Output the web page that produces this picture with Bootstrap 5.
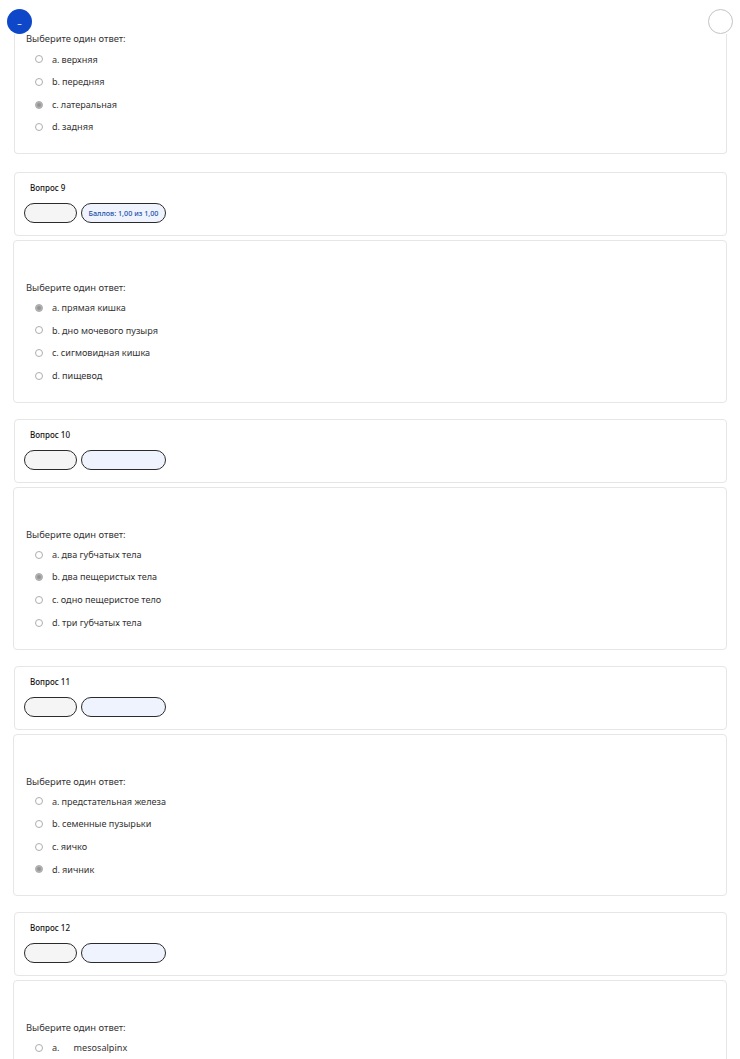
<!DOCTYPE html>
<html lang="ru">
<head>
  <meta charset="UTF-8" />
  <meta name="viewport" content="width=device-width, initial-scale=1" />
  <title>Тест</title>
  <link href="https://cdn.jsdelivr.net/npm/bootstrap@5.3.3/dist/css/bootstrap.min.css" rel="stylesheet" />
  <style>
    body {
      font-family: "Noto Sans", sans-serif;
      font-size: 9.1px;
      color: #333;
      background: #fff;
      height: 1059px;
      overflow: hidden;
    }

    /* white strip under the two round buttons, hides the scrolled card top */
    .top-strip {
      position: fixed;
      top: 0;
      left: 0;
      right: 0;
      height: 34px;
      background: #fff;
      z-index: 5;
    }

    .round-btn {
      position: fixed;
      top: 9px;
      width: 25px;
      height: 25px;
      border-radius: 50%;
      z-index: 6;
    }

    .round-btn-blue {
      left: 7px;
      background: #0f47c9;
      color: #fff;
      font-size: 9px;
      line-height: 29px;
      text-align: center;
    }

    .round-btn-white {
      left: 708px;
      background: #fff;
      border: 1px solid #c4c4c4;
    }

    .quiz-wrap {
      padding: 0 13px 0 14px;
    }

    .quiz-box {
      border: 1px solid #e6e6e6;
      border-radius: 4px;
      background: #fff;
    }

    .first-box {
      height: 153.5px;
      border-top: 0;
      border-radius: 0 0 4px 4px;
      padding-top: 32px;
      margin-bottom: 18.5px;
    }

    .q-info {
      height: 64px;
      padding: 9px 9px 0;
      margin-bottom: 4px;
    }

    .q-title {
      font-size: 8px;
      font-weight: 500;
      color: #111;
      line-height: 12px;
      padding-left: 6px;
      margin-bottom: 9px;
    }

    .q-pill {
      height: 20px;
      border: 1px solid #2b2b2b;
      border-radius: 10px;
      font-size: 7.2px;
      font-weight: 500;
      color: #1a4fa8;
      line-height: 18px;
      text-align: center;
    }

    .pill-state {
      width: 53px;
      background: #f5f5f5;
    }

    .pill-grade {
      width: 85px;
      background: #eef3fd;
    }

    .q-body {
      height: 162.8px;
      margin: 0 0 16px -1px;
      padding-top: 40px;
    }

    .prompt {
      font-size: 9.4px;
      line-height: 14px;
      padding-left: 12px;
      margin-bottom: 1.5px;
    }

    .first-box .prompt {
      padding-left: 11px;
      margin-bottom: 2px;
    }

    .answer-row {
      height: 22.67px;
      padding-left: 21px;
      gap: 9px;
    }

    .first-box .answer-row {
      padding-left: 20px;
    }

    .answer-row .form-check-input {
      width: 8px;
      height: 8px;
      margin: 0;
      border-color: #8d8d8d;
      opacity: .7;
    }

    .answer-row .form-check-input:checked {
      background-color: #8f8f8f;
      background-image: radial-gradient(circle, #666 0 30%, #8f8f8f 60%);
      border-color: #8f8f8f;
    }

    .answer-row label {
      opacity: 1 !important;
      color: #333 !important;
    }

    .opt-num {
      margin-right: 2px;
    }

    .opt-gap {
      margin-right: 14px;
    }
  </style>
</head>
<body>
  <div class="top-strip"></div>
  <div class="round-btn round-btn-blue">–</div>
  <div class="round-btn round-btn-white"></div>

  <div class="quiz-wrap">
    <div id="quiz"></div>
  </div>

  <script src="https://cdn.jsdelivr.net/npm/bootstrap@5.3.3/dist/js/bootstrap.bundle.min.js"></script>
  <script>
    const quiz = document.getElementById('quiz');
    const letters = ['a', 'b', 'c', 'd'];

    const questions = [
      { first: true, name: 'q8', picked: 2, options: ['верхняя', 'передняя', 'латеральная', 'задняя'] },
      { num: 9, grade: 'Баллов: 1,00 из 1,00', picked: 0, options: ['прямая кишка', 'дно мочевого пузыря', 'сигмовидная кишка', 'пищевод'] },
      { num: 10, grade: '', picked: 1, options: ['два губчатых тела', 'два пещеристых тела', 'одно пещеристое тело', 'три губчатых тела'] },
      { num: 11, grade: '', picked: 3, options: ['предстательная железа', 'семенные пузырьки', 'яичко', 'яичник'] },
      { num: 12, grade: '', picked: -1, wide: true, options: ['mesosalpinx'] }
    ];

    function optionsHtml(q, name) {
      return q.options.map((text, i) => `
        <div class="answer-row d-flex align-items-center">
          <input class="form-check-input mt-0" type="radio" name="${name}" id="${name}-${i}" disabled ${q.picked === i ? 'checked' : ''} />
          <label for="${name}-${i}"><span class="${q.wide ? 'opt-gap' : 'opt-num'}">${letters[i]}.</span>${text}</label>
        </div>`).join('');
    }

    quiz.innerHTML = questions.map(q => {
      const name = q.name || 'q' + q.num;
      if (q.first) {
        return `<div class="quiz-box first-box">
          <div class="prompt">Выберите один ответ:</div>
          ${optionsHtml(q, name)}
        </div>`;
      }
      return `<div class="quiz-box q-info">
          <div class="q-title">Вопрос ${q.num}</div>
          <div class="d-flex gap-1">
            <div class="q-pill pill-state"></div>
            <div class="q-pill pill-grade">${q.grade}</div>
          </div>
        </div>
        <div class="quiz-box q-body">
          <div class="prompt">Выберите один ответ:</div>
          ${optionsHtml(q, name)}
        </div>`;
    }).join('');
  </script>
</body>
</html>
